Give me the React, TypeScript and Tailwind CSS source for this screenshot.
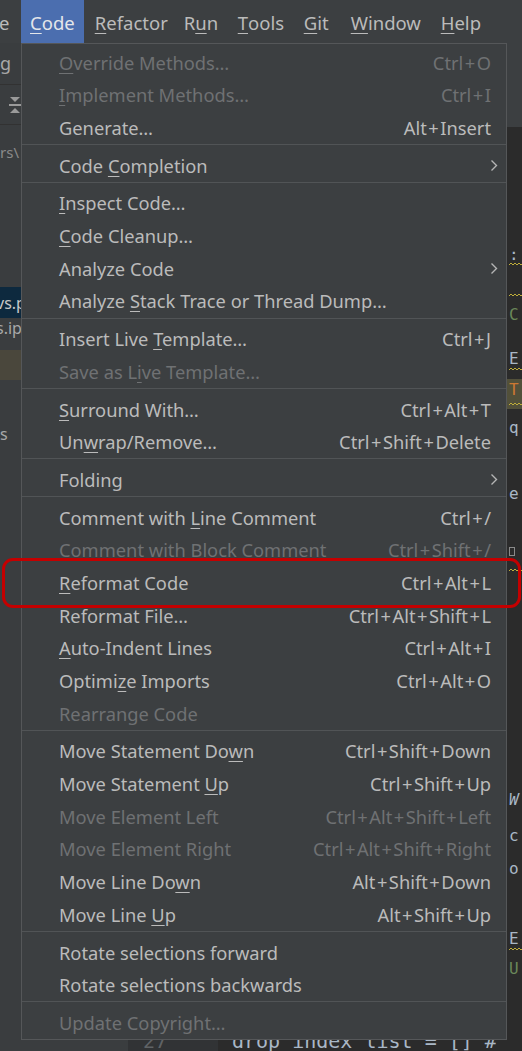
import React from "react";

type Entry =
  | "sep"
  | { label: string; u?: number; sc?: string; dis?: boolean; sub?: boolean };

const items: Entry[] = [
  { label: "Override Methods…", u: 0, sc: "Ctrl+O", dis: true },
  { label: "Implement Methods…", u: 0, sc: "Ctrl+I", dis: true },
  { label: "Generate…", sc: "Alt+Insert" },
  "sep",
  { label: "Code Completion", u: 5, sub: true },
  "sep",
  { label: "Inspect Code…", u: 0 },
  { label: "Code Cleanup…", u: 0 },
  { label: "Analyze Code", sub: true },
  { label: "Analyze Stack Trace or Thread Dump…", u: 8 },
  "sep",
  { label: "Insert Live Template…", u: 12, sc: "Ctrl+J" },
  { label: "Save as Live Template…", u: 9, dis: true },
  "sep",
  { label: "Surround With…", u: 0, sc: "Ctrl+Alt+T" },
  { label: "Unwrap/Remove…", u: 2, sc: "Ctrl+Shift+Delete" },
  "sep",
  { label: "Folding", sub: true },
  "sep",
  { label: "Comment with Line Comment", u: 13, sc: "Ctrl+/" },
  { label: "Comment with Block Comment", sc: "Ctrl+Shift+/", dis: true },
  { label: "Reformat Code", u: 0, sc: "Ctrl+Alt+L" },
  { label: "Reformat File…", sc: "Ctrl+Alt+Shift+L" },
  { label: "Auto-Indent Lines", u: 0, sc: "Ctrl+Alt+I" },
  { label: "Optimize Imports", u: 6, sc: "Ctrl+Alt+O" },
  { label: "Rearrange Code", dis: true },
  "sep",
  { label: "Move Statement Down", u: 17, sc: "Ctrl+Shift+Down" },
  { label: "Move Statement Up", u: 15, sc: "Ctrl+Shift+Up" },
  { label: "Move Element Left", sc: "Ctrl+Alt+Shift+Left", dis: true },
  { label: "Move Element Right", sc: "Ctrl+Alt+Shift+Right", dis: true },
  { label: "Move Line Down", u: 12, sc: "Alt+Shift+Down" },
  { label: "Move Line Up", u: 10, sc: "Alt+Shift+Up" },
  "sep",
  { label: "Rotate selections forward" },
  { label: "Rotate selections backwards" },
  "sep",
  { label: "Update Copyright…", dis: true },
];

// widths taken from the menu bar spacing
const menus: { label: string; u: number; w: string }[] = [
  { label: "Refactor", u: 0, w: "w-[89px]" },
  { label: "Run", u: 1, w: "w-[54px]" },
  { label: "Tools", u: 0, w: "w-[66px]" },
  { label: "Git", u: 0, w: "w-[47px]" },
  { label: "Window", u: 0, w: "w-[90px]" },
  { label: "Help", u: 0, w: "w-[60px]" },
];

const mono = { fontFamily: '"DejaVu Sans Mono", "Liberation Mono", monospace' };

function Mnemonic({ text, u }: { text: string; u?: number }) {
  if (u === undefined) return <>{text}</>;
  return (
    <>
      {text.slice(0, u)}
      <span className="underline decoration-1 underline-offset-[3px]">{text[u]}</span>
      {text.slice(u + 1)}
    </>
  );
}

// shortcut keys, the "+" in the IDE font sits a bit wider
function Shortcut({ keys }: { keys: string }) {
  const parts = keys.split("+");
  return (
    <span>
      {parts.map((p, i) => (
        <React.Fragment key={i}>
          {i > 0 && <span className="mx-[1.5px]">+</span>}
          {p}
        </React.Fragment>
      ))}
    </span>
  );
}

function Chevron() {
  return (
    <svg width="8" height="13" viewBox="0 0 8 13" fill="none" className="mr-[8px]">
      <path d="M1.5 1.5 L6.5 6.5 L1.5 11.5" stroke="#b5b5b5" strokeWidth="1.4" />
    </svg>
  );
}

function Squiggle() {
  return (
    <svg width="15" height="5" viewBox="0 0 15 5" className="flex-shrink-0">
      <path d="M0 3 L2 1 L4 3 L6 1 L8 3 L10 1 L12 3 L14 1" stroke="#bfae3a" strokeWidth="1" fill="none" />
    </svg>
  );
}

export default function App() {
  return (
    <div
      className="relative flex h-[1051px] w-[522px] flex-col overflow-hidden bg-[#2b2b2b] text-[#bbbbbb]"
      style={{ fontFamily: '"Noto Sans", "Open Sans", sans-serif' }}
    >
      {/* Menu bar */}
      <div className="flex h-[43px] flex-shrink-0 items-stretch bg-[#3c3f41] text-[18.5px]">
        <div className="flex w-[21px] items-center overflow-hidden pt-[3px]">
          <span className="-ml-[1px]">e</span>
        </div>
        <div className="flex items-center bg-[#4b6eaf] px-[9px] pt-[3px] text-[#e3e6ea]">
          <Mnemonic text="Code" u={0} />
        </div>
        <div className="w-[1px]" />
        {menus.map((m) => (
          <div key={m.label} className={"flex flex-shrink-0 items-center whitespace-nowrap pl-[10px] pt-[3px] " + m.w}>
            <Mnemonic text={m.label} u={m.u} />
          </div>
        ))}
      </div>

      {/* Body */}
      <div className="flex flex-1 overflow-hidden">
        {/* Left sliver of the IDE */}
        <div className="flex w-[21px] flex-shrink-0 flex-col overflow-hidden bg-[#3a3d3f] text-[18px] text-[#a8a8a8]">
          <div className="flex h-[42px] flex-shrink-0 items-center border-b border-[#323232]">g</div>
          <div className="flex h-[40px] flex-shrink-0 items-center justify-end border-b border-[#323232]">
            <svg width="12" height="20" viewBox="0 0 12 20">
              <path d="M1 2 L11 2 L6 7 Z" fill="#9a9a9a" />
              <rect x="0" y="9" width="12" height="2" fill="#9a9a9a" />
              <path d="M1 18 L11 18 L6 13 Z" fill="#9a9a9a" />
            </svg>
          </div>
          <div className="flex h-[54px] flex-shrink-0 items-center text-[15px] text-[#8a8a8a]">rs\</div>
          <div className="h-[108px] flex-shrink-0" />
          <div className="flex h-[31px] flex-shrink-0 items-center whitespace-nowrap bg-[#0d293e] text-[16px] text-[#c8c8c8]">
            <span className="-ml-[4px]">vs.p</span>
          </div>
          <div className="flex h-[20px] flex-shrink-0 items-center whitespace-nowrap text-[16px]">
            <span className="-ml-[4px]">s.ip</span>
          </div>
          <div className="h-[12px] flex-shrink-0" />
          <div className="h-[30px] flex-shrink-0 bg-[#4a473c]" />
          <div className="h-[44px] flex-shrink-0" />
          <div className="flex h-[20px] flex-shrink-0 items-center text-[16px]">s</div>
        </div>

        {/* Popup menu */}
        <div className="flex w-[486px] flex-shrink-0 flex-col self-start border border-[#555759] bg-[#3c3f41] pt-[2px] text-[18.3px]">
          {items.map((it, i) =>
            it === "sep" ? (
              <div key={i} className="h-[5px] border-t border-[#515456]" />
            ) : (
              <div
                key={i}
                className={
                  "flex h-[32.7px] items-center justify-between whitespace-nowrap pl-[37px] " +
                  (it.sub ? "pr-0" : "pr-[15px]") +
                  (it.dis ? " text-[#6f7173]" : " text-[#bbbbbb]")
                }
              >
                <span>
                  <Mnemonic text={it.label} u={it.u} />
                </span>
                {it.sc && <Shortcut keys={it.sc} />}
                {it.sub && <Chevron />}
              </div>
            )
          )}
        </div>

        {/* Right sliver of the editor */}
        <div className="flex flex-1 flex-col overflow-hidden pl-[2px] text-[16px] leading-none text-[#a9b7c6]" style={mono}>
          <div className="-ml-[2px] h-[84px] flex-shrink-0 bg-[#3c3f41]" />
          <div className="h-[121px] flex-shrink-0" />
          <div className="flex h-[14px] flex-shrink-0 items-center">:</div>
          <Squiggle />
          <div className="h-[26px] flex-shrink-0" />
          <Squiggle />
          <div className="h-[8px] flex-shrink-0" />
          <div className="flex h-[18px] flex-shrink-0 items-center text-[#6a8759]">C</div>
          <div className="h-[27px] flex-shrink-0" />
          <div className="flex h-[16px] flex-shrink-0 items-center">E</div>
          <Squiggle />
          <div className="h-[7px] flex-shrink-0" />
          <div className="-ml-[2px] flex h-[30px] flex-shrink-0 flex-col justify-between bg-[#52503a] pb-[2px] pl-[2px] pt-[3px] text-[#cc7832]">
            <span>T</span>
            <Squiggle />
          </div>
          <div className="h-[10px] flex-shrink-0" />
          <div className="flex h-[18px] flex-shrink-0 items-center">q</div>
          <div className="h-[48px] flex-shrink-0" />
          <div className="flex h-[18px] flex-shrink-0 items-center">e</div>
          <div className="h-[44px] flex-shrink-0" />
          <div className="h-[9px] w-[6px] flex-shrink-0 border border-[#8a8a8a]" />
          <div className="h-[12px] flex-shrink-0" />
          <Squiggle />
          <div className="h-[219px] flex-shrink-0" />
          <div className="flex h-[16px] flex-shrink-0 items-center italic">W</div>
          <div className="h-[20px] flex-shrink-0" />
          <div className="flex h-[16px] flex-shrink-0 items-center">c</div>
          <div className="h-[17px] flex-shrink-0" />
          <div className="flex h-[16px] flex-shrink-0 items-center">o</div>
          <div className="h-[54px] flex-shrink-0" />
          <div className="flex h-[16px] flex-shrink-0 items-center">E</div>
          <Squiggle />
          <div className="h-[9px] flex-shrink-0" />
          <div className="flex h-[16px] flex-shrink-0 items-center text-[#6a8759]">U</div>
        </div>
      </div>

      {/* Editor line peeking out below the popup */}
      <div className="flex h-[11px] flex-shrink-0 overflow-hidden">
        <div className="w-[128px] bg-[#3a3d3f]" />
        <div className="flex w-[90px] bg-[#313335] pl-[15px] text-[20px] text-[#606366]" style={mono}>
          <span className="-mt-[14px] leading-[30px]">27</span>
        </div>
        <div className="flex flex-1 bg-[#2b2b2b] pl-[14px] text-[20px] text-[#a9b7c6]" style={mono}>
          <span className="-mt-[14px] whitespace-pre leading-[30px]">drop_index_list = [] #</span>
        </div>
      </div>

      {/* Red highlight around "Reformat Code" */}
      <div className="pointer-events-none absolute left-[2px] top-[558px] h-[50px] w-[519px] rounded-[11px] border-[3px] border-[#c40000]" />
    </div>
  );
}
